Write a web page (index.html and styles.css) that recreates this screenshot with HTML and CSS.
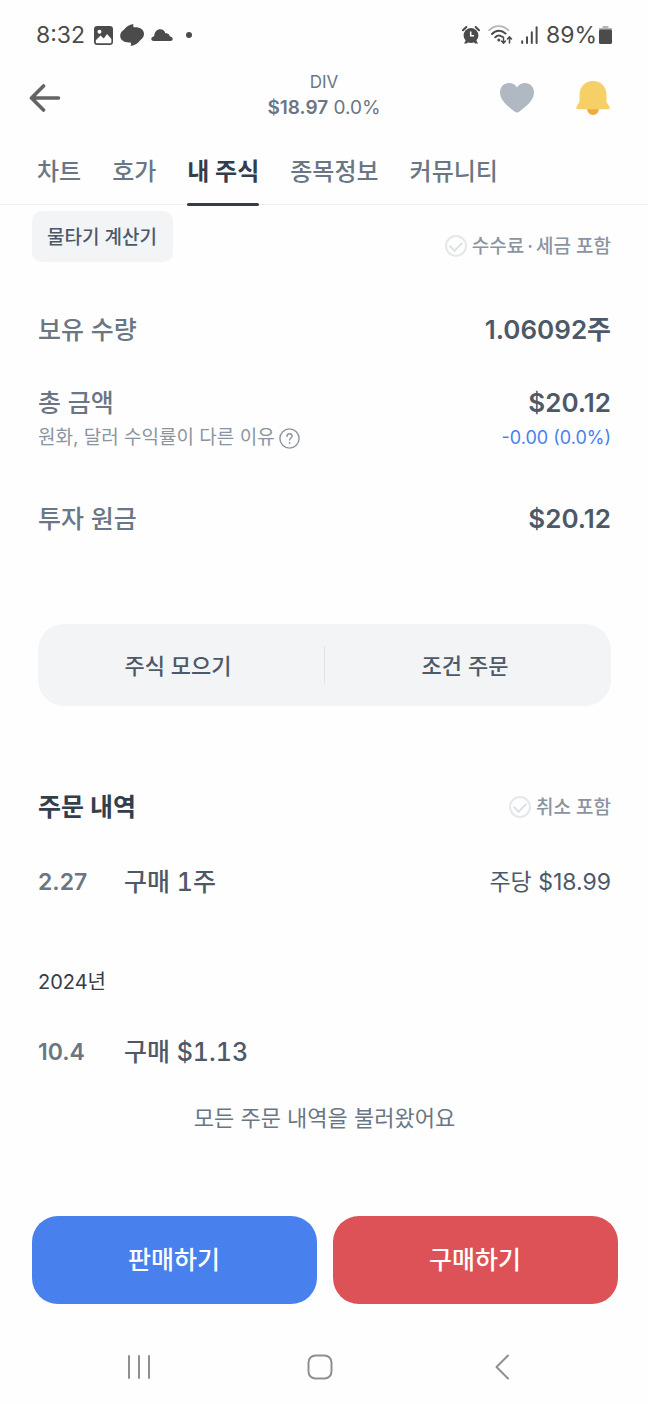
FILE: index.html
```html
<!DOCTYPE html>
<html lang="ko">
<head>
<meta charset="utf-8">
<meta name="viewport" content="width=device-width, initial-scale=1">
<title>DIV 내 주식</title>
<link rel="stylesheet" href="styles.css">
</head>
<body>
<div class="status">
  <div class="status-left">
    <span class="clock">8:32</span>
    <svg width="19" height="19" viewBox="0 0 19 19"><rect x="0.8" y="0.8" width="17.4" height="17.4" rx="2.5" fill="#4b4b4b" stroke="#4b4b4b" stroke-width="1.6"/><circle cx="5.5" cy="5.8" r="2" fill="#fff"/><path d="M1.8 14.2 6.6 9.4l3.1 3.2 3.4-4.600 4.300 5v3.200a1 1 0 0 1-1 1H2.800a1 1 0 0 1-1-1z" fill="#fff"/></svg>
    <svg width="24" height="22" viewBox="0 0 24 22"><path d="M13.500 0c-.5 1.500-.3 2.700.5 3.400C20 3 24 5.800 24 10c0 2.700-1.700 4.900-3.800 6.200-2 3-5 5.200-9.700 5.800.8-1.400.8-2.700 0-3.600C4.300 18.900.2 16 .2 12c0-2.700 1.400-5 3.700-6.300C6 2.700 9 .6 13.500 0z" fill="#4b4b4b"/></svg>
    <svg width="22" height="12" viewBox="0 0 22 12"><path d="M2.800 12C1.200 12 .3 11.200.3 10c0-1.400 1-2.300 2.800-2.800C3.600 3 5.900.3 9.200.3c2.600 0 4.400 1.500 5.200 4 2.400-.2 4 .8 4.300 2.900 1.900.4 3 1.300 3 2.800 0 1.200-.9 2-2.400 2z" fill="#4b4b4b"/></svg>
    <span class="dot"></span>
  </div>
  <div class="status-right">
    <svg width="18" height="18" viewBox="0 0 18 18"><path d="M1 4.300 4.300 1M17 4.300 13.700 1" stroke="#4b4b4b" stroke-width="2" stroke-linecap="round"/><path d="m4 14-2 3.500h3l1.500-2zM14 14l2 3.500h-3l-1.500-2z" fill="#4b4b4b"/><circle cx="9" cy="9.500" r="7.400" fill="#4b4b4b"/><path d="M8.700 5.500v4.300H12" fill="none" stroke="#fff" stroke-width="1.500"/></svg>
    <svg width="25" height="20" viewBox="0 0 25 20"><g fill="none" stroke-linecap="round"><path d="M1.200 5.200C6.500-.3 15-.3 20.300 5.200" stroke="#b5b5b5" stroke-width="1.800"/><path d="M4 9c4-4.200 9.700-4.200 13.600-.4M7.300 12.200c2-2 4.800-2.100 6.800-.4" stroke="#4b4b4b" stroke-width="2"/><path d="M15.500 12v6m-2-2 2 2.200 2-2.200M21.500 18v-6m-2 2 2-2.200 2 2.200" stroke="#4b4b4b" stroke-width="1.500"/></g><circle cx="10.800" cy="15" r="1.500" fill="#4b4b4b"/></svg>
    <svg width="17" height="18" viewBox="0 0 17 18"><path d="M1.200 15.200V17M6 11.200V17M10.800 6.200V17M15.600 1.200V17" stroke="#4b4b4b" stroke-width="2" stroke-linecap="round"/></svg>
    <span class="battery-text">89%</span>
    <svg width="13" height="18" viewBox="0 0 13 18"><path d="M3.500 0h6v2H13v2H0V2h3.500z" fill="#b5b5b5"/><rect y="3.500" width="13" height="14.500" rx="1.500" fill="#4b4b4b"/></svg>
  </div>
</div>

<header class="header">
  <button class="icon-button" type="button" aria-label="뒤로"><svg width="32" height="28" viewBox="0 0 32 28"><path d="M14.500 2 2.500 14l12 12M3 14h26.500" fill="none" stroke="#636466" stroke-width="3.600" stroke-linecap="round" stroke-linejoin="round"/></svg></button>
  <div class="quote">
    <h1 class="ticker">DIV</h1>
    <div class="price"><strong>$18.97</strong> 0.0%</div>
  </div>
  <div class="header-actions">
    <button class="icon-button" type="button" aria-label="관심"><svg width="36" height="31" viewBox="0 0 36 31"><path d="M18 5.500C20 2 23 1 26 1c5 0 9 3.800 9 9.500 0 8.500-9 14.500-14.500 19-1.500 1.200-3.500 1.200-5 0C10 25 1 19 1 10.500 1 4.800 5 1 10 1c3 0 6 1 8 4.500z" fill="#b0b8c1"/></svg></button>
    <button class="icon-button" type="button" aria-label="알림"><svg width="34" height="34" viewBox="0 0 34 34"><path d="M11 27h12c0 4-2.500 7-6 7s-6-3-6-7z" fill="#eeab43"/><path d="M17 0C9 0 3.500 6 3.500 13.500V21L.8 25.300c-1 1.600-.3 3 1.500 3h29.400c1.800 0 2.500-1.400 1.500-3L30.500 21v-7.500C30.500 6 25 0 17 0z" fill="#f6cf67"/></svg></button>
  </div>
</header>

<nav class="tabs" aria-label="종목 메뉴">
  <a class="tab" href="#chart">차트</a>
  <a class="tab" href="#quote">호가</a>
  <a class="tab tab-active" href="#mine" aria-current="page">내 주식</a>
  <a class="tab" href="#info">종목정보</a>
  <a class="tab" href="#community">커뮤니티</a>
</nav>

<main class="content">
  <div class="tools">
    <button class="calc" type="button">물타기 계산기</button>
    <label class="check"><input type="checkbox"><span>수수료<span class="middot">·</span>세금 포함</span></label>
  </div>

  <dl class="holdings">
    <div class="line"><dt>보유 수량</dt><dd>1.06092주</dd></div>
    <div class="total">
      <div class="line"><dt>총 금액</dt><dd>$20.12</dd></div>
      <div class="note">
        <dt><button class="why" type="button">원화, 달러 수익률이 다른 이유<svg width="21" height="21" viewBox="0 0 21 21" fill="none" stroke="#8b95a1" stroke-linecap="round"><circle cx="10.500" cy="10.500" r="9.600" stroke-width="1.400"/><path d="M8 8.400c0-1.600 1.100-2.600 2.600-2.600s2.500 1 2.500 2.300c0 1.900-2.500 2-2.500 4" stroke-width="1.400"/><path d="M10.600 14.900v.1" stroke-width="1.800"/></svg></button></dt>
        <dd>-0.00 (0.0%)</dd>
      </div>
    </div>
    <div class="line"><dt>투자 원금</dt><dd>$20.12</dd></div>
  </dl>

  <div class="shortcuts">
    <button type="button">주식 모으기</button>
    <button type="button">조건 주문</button>
  </div>

  <section class="orders">
    <div class="orders-head">
      <h2>주문 내역</h2>
      <label class="check"><input type="checkbox"><span>취소 포함</span></label>
    </div>
    <div class="order"><span class="date">2.27</span><span class="deal">구매 1주</span><span class="unit">주당 $18.99</span></div>
    <h3 class="year">2024년</h3>
    <div class="order"><span class="date">10.4</span><span class="deal">구매 $1.13</span></div>
    <p class="end">모든 주문 내역을 불러왔어요</p>
  </section>
</main>

<div class="trade">
  <button class="sell" type="button">판매하기</button>
  <button class="buy" type="button">구매하기</button>
</div>

<nav class="system" aria-label="시스템">
  <button class="icon-button" type="button" aria-label="최근 앱"><svg width="26" height="26" viewBox="0 0 26 26"><path d="M3 2v22M13 2v22M23 2v22" stroke="#8f8f8f" stroke-width="2" stroke-linecap="round"/></svg></button>
  <button class="icon-button" type="button" aria-label="홈"><svg width="26" height="26" viewBox="0 0 26 26"><rect x="1.500" y="1.500" width="23" height="23" rx="7" fill="none" stroke="#8f8f8f" stroke-width="2"/></svg></button>
  <button class="icon-button" type="button" aria-label="이전"><svg width="26" height="26" viewBox="0 0 26 26"><path d="M20 1.500 8.500 13 20 24.500" fill="none" stroke="#8f8f8f" stroke-width="2" stroke-linecap="round" stroke-linejoin="round"/></svg></button>
</nav>
</body>
</html>
```

FILE: styles.css
```css
* { box-sizing: border-box; }

body {
  margin: 0;
  min-height: 100vh;
  display: flex;
  flex-direction: column;
  background: #fefefe;
  color: #4e5968;
  font-family: Inter, "Noto Sans CJK KR", sans-serif;
}

h1, h2, h3, p, dl, dd { margin: 0; }

svg { display: block; flex: none; }

button {
  margin: 0;
  padding: 0;
  border: 0;
  background: none;
  color: inherit;
  font: inherit;
  cursor: pointer;
}

.status {
  display: flex;
  justify-content: space-between;
  padding: 20px 36px 12px;
  line-height: 30px;
  font-size: 23px;
  color: #4b4b4b;
}

.status-left, .status-right { display: flex; align-items: center; }
.status-left { gap: 7px; }
.status-right { gap: 8px; }
.clock { margin-right: 2px; }
.battery-text { margin-right: -6px; }
.dot {
  width: 6px;
  height: 6px;
  margin-left: 6px;
  border-radius: 50%;
  background: #4b4b4b;
}

.header {
  display: grid;
  grid-template-columns: 1fr auto 1fr;
  align-items: center;
  height: 71px;
  padding: 0 29px;
}

.quote {
  padding-bottom: 5px;
  text-align: center;
  color: #6b7684;
}

.ticker {
  font-size: 17px;
  line-height: 26px;
  font-weight: 400;
}

.price { font-size: 19px; line-height: 26px; }
.price strong { font-weight: 600; }

.header-actions {
  display: flex;
  justify-content: flex-end;
  align-items: center;
  gap: 41px;
  padding-right: 9px;
}

.tabs {
  display: flex;
  gap: 31px;
  padding: 24px 37px 0;
  border-bottom: 1px solid #eff0f2;
}

.tab {
  position: relative;
  padding-bottom: 17px;
  font-size: 24px;
  line-height: 30px;
  font-weight: 500;
  color: #6b7684;
  text-decoration: none;
}

.tab-active { font-weight: 700; color: #333d4b; }

.tab-active::after {
  content: "";
  position: absolute;
  right: 0;
  bottom: -2px;
  left: 0;
  height: 3px;
  border-radius: 2px;
  background: #333d4b;
}

.content { padding: 6px 37px 0 38px; }

.tools {
  display: flex;
  justify-content: space-between;
  align-items: flex-end;
  margin-left: -6px;
}

.calc {
  height: 51px;
  padding: 0 16px 2px 15px;
  border-radius: 10px;
  background: #f2f4f6;
  font-size: 19px;
  font-weight: 500;
}

.check {
  display: flex;
  align-items: center;
  gap: 5px;
  font-size: 19px;
  line-height: 30px;
  font-weight: 500;
  color: #8b95a1;
}

.check span { padding-top: 2px; }
.check .middot { padding: 0 3px; }

.check input {
  appearance: none;
  display: grid;
  place-items: center;
  width: 22px;
  height: 22px;
  margin: 0;
  border: 2px solid #e5e8eb;
  border-radius: 50%;
}

.check input::before {
  content: "";
  width: 10px;
  height: 6px;
  margin-bottom: 3px;
  border: solid #dce0e4;
  border-width: 0 0 2px 2px;
  rotate: -45deg;
}

.holdings { padding-top: 50px; }

.line, .note, .orders-head, .order {
  display: flex;
  justify-content: space-between;
  align-items: center;
}

.line { line-height: 36px; }
.line dt { font-size: 25px; font-weight: 500; color: #6b7684; }
.line dd { font-size: 26px; font-weight: 600; }

.total { margin: 37px 0 48px; }

.note {
  margin-top: 2px;
  font-size: 19px;
  line-height: 30px;
}

.note dd { font-size: 18px; color: #4880ee; }

.why {
  display: flex;
  align-items: center;
  gap: 4px;
  color: #8b95a1;
}

.shortcuts {
  display: flex;
  align-items: center;
  height: 82px;
  margin-top: 87px;
  border-radius: 26px;
  background: #f2f4f6;
}

.shortcuts button {
  flex: 1;
  height: 38px;
  padding: 0 6px 3px 0;
  font-size: 22px;
  font-weight: 500;
}

.shortcuts button + button { border-left: 1px solid #dfe2e6; }

.orders { padding-top: 83px; }

.orders-head h2 {
  font-size: 25px;
  line-height: 36px;
  font-weight: 700;
  color: #333d4b;
}

.order { line-height: 36px; font-size: 25px; font-weight: 500; }
.orders-head + .order { margin-top: 39px; }
.date { width: 86px; font-size: 23px; font-weight: 600; color: #6b7684; }
.deal { flex: 1; font-variant-numeric: tabular-nums; }
.unit { font-size: 23px; font-weight: 400; }

.year {
  margin: 64px 0 34px;
  font-size: 20px;
  line-height: 36px;
  font-weight: 400;
  color: #333d4b;
}

.end {
  margin-top: 30px;
  font-size: 22px;
  line-height: 36px;
  text-align: center;
  color: #6b7684;
}

.trade {
  display: flex;
  gap: 16px;
  margin-top: auto;
  padding: 0 30px 0 32px;
}

.trade button {
  flex: 1;
  height: 88px;
  padding: 0 1px 4px 0;
  border-radius: 26px;
  color: #fff;
  font-size: 25px;
  font-weight: 500;
}

.sell { background: #4880ee; }
.buy { background: #dd5257; }

.system {
  display: grid;
  grid-template-columns: repeat(3, 1fr);
  justify-items: center;
  padding: 50px 56px 24px 48px;
}
```
